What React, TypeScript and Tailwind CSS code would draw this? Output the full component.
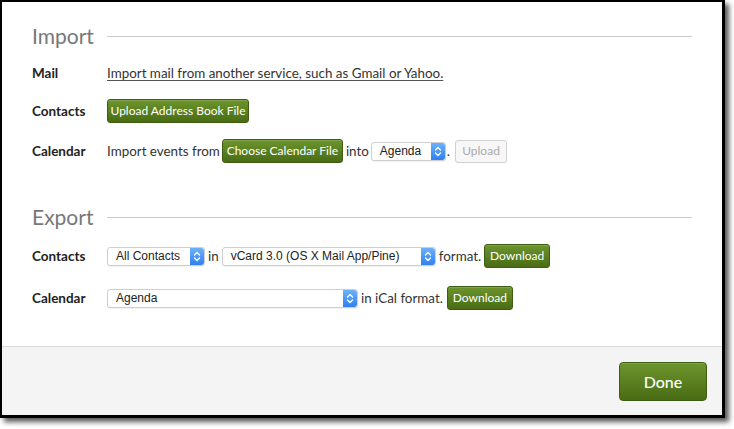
import React from 'react';

const font = { fontFamily: 'Lato, "Open Sans", sans-serif' };

const GreenButton = ({ children, className = '' }: { children: React.ReactNode; className?: string }) => (
  <button
    className={`flex items-center justify-center whitespace-nowrap rounded-[3px] border border-[#3f5d12] bg-gradient-to-b from-[#6d952c] to-[#496c14] text-white shadow-[inset_0_1px_0_rgba(255,255,255,0.15)] ${className}`}
  >
    {children}
  </button>
);

const Chevrons = () => (
  <svg width="8" height="11" viewBox="0 0 8 11" fill="none" stroke="white" strokeWidth="1.3" strokeLinecap="round" strokeLinejoin="round">
    <path d="M1.5 4 L4 1.5 L6.5 4" />
    <path d="M1.5 7 L4 9.5 L6.5 7" />
  </svg>
);

const Select = ({ label, width }: { label: string; width: string }) => (
  <div
    className={`flex h-[19px] ${width} items-center justify-between rounded-[3px] border border-[#cfcfcf] bg-white pl-[8px] text-[12px] text-[#222] shadow-[0_1px_1px_rgba(0,0,0,0.06)]`}
    style={{ fontFamily: '"Liberation Sans", Arial, sans-serif' }}
  >
    <span className="whitespace-nowrap">{label}</span>
    <span className="flex h-[17px] w-[14px] items-center justify-center rounded-r-[3px] bg-gradient-to-b from-[#6cb1fb] to-[#2f7ff0]">
      <Chevrons />
    </span>
  </div>
);

const Heading = ({ title }: { title: string }) => (
  <div className="flex h-[28px] items-center">
    <div className="w-[75px] text-[21px] text-[#777]">{title}</div>
    <div className="h-px flex-1 bg-[#cccccc]" />
  </div>
);

const Row = ({ label, children, className = '' }: { label: string; children: React.ReactNode; className?: string }) => (
  <div className={`flex h-[24px] items-center ${className}`}>
    <div className="w-[75px] text-[13.5px] font-bold text-[#222]">{label}</div>
    <div className="flex items-center whitespace-nowrap text-[13.4px] text-[#333]">{children}</div>
  </div>
);

export default function App() {
  return (
    <div className="h-[429px] w-[734px] bg-white" style={font}>
      <div className="flex h-[418px] w-[725px] flex-col border-b-[3px] border-l-2 border-r-[3px] border-t-2 border-black bg-white shadow-[4px_4px_5px_rgba(0,0,0,0.65)]">
        <div className="flex-1 px-[30px] pt-[20px]">
          <Heading title="Import" />
          <Row label="Mail" className="mt-[11px]">
            <span className="underline decoration-[#555] underline-offset-2">Import mail from another service, such as Gmail or Yahoo.</span>
          </Row>
          <Row label="Contacts" className="mt-[14px]">
            <GreenButton className="h-[24px] w-[142px] text-[12px]">Upload Address Book File</GreenButton>
          </Row>
          <Row label="Calendar" className="mt-[16px]">
            <span className="mr-[2px]">Import events from</span>
            <GreenButton className="h-[24px] w-[121px] text-[12px]">Choose Calendar File</GreenButton>
            <span className="ml-[3px] mr-[2px]">into</span>
            <Select label="Agenda" width="w-[75px]" />
            <span className="ml-px mr-[5px]">.</span>
            <button className="h-[23px] w-[52px] rounded-[3px] border border-[#d0d0d0] bg-[#f7f7f7] text-[12px] text-[#aaa]">
              Upload
            </button>
          </Row>
          <div className="mt-[40px]">
            <Heading title="Export" />
          </div>
          <Row label="Contacts" className="mt-[13px]">
            <Select label="All Contacts" width="w-[98px]" />
            <span className="ml-[3px] mr-[3px]">in</span>
            <Select label="vCard 3.0 (OS X Mail App/Pine)" width="w-[214px]" />
            <span className="ml-[3px] mr-[3px]">format.</span>
            <GreenButton className="h-[24px] w-[66px] text-[12px]">Download</GreenButton>
          </Row>
          <Row label="Calendar" className="mt-[18px]">
            <Select label="Agenda" width="w-[251px]" />
            <span className="ml-[3px] mr-[4px]">in iCal format.</span>
            <GreenButton className="h-[24px] w-[66px] text-[12px]">Download</GreenButton>
          </Row>
        </div>
        <div className="flex h-[69px] items-start justify-end border-t border-[#d9d9d9] bg-[#f4f4f4] pr-[15px] pt-[15px]">
          <GreenButton className="h-[39px] w-[88px] rounded-[4px] text-[16px] font-medium">Done</GreenButton>
        </div>
      </div>
    </div>
  );
}
